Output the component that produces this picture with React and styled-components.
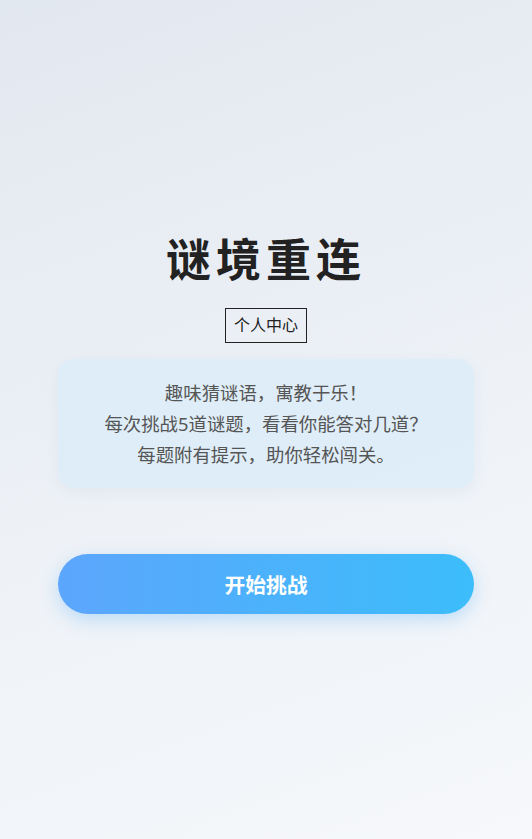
import React from "react";
import styled, { createGlobalStyle } from "styled-components";

const GlobalStyle = createGlobalStyle`
  html, body {
    margin: 0;
    padding: 0;
  }
  body {
    font-family: "Noto Sans", "Noto Sans CJK SC", sans-serif;
  }
  * {
    box-sizing: border-box;
  }
`;

const Page = styled.div`
  min-height: 100vh;
  display: flex;
  flex-direction: column;
  align-items: center;
  justify-content: center;
  padding: 8px 58px 0;
  background: linear-gradient(160deg, #e2e8f0 0%, #edf1f6 50%, #f6f8fb 100%);
`;

const Title = styled.h1`
  margin: 0 0 22px;
  font-size: 45px;
  line-height: 53px;
  font-weight: 700;
  letter-spacing: 5px;
  color: #222222;
`;

const ProfileButton = styled.button`
  font-family: inherit;
  font-size: 16px;
  line-height: 21px;
  padding: 6px 8px;
  color: #222222;
  background: transparent;
  border: 1px solid #222222;
  border-radius: 0;
  margin-bottom: 16px;
  cursor: pointer;
`;

const IntroCard = styled.div`
  width: 100%;
  padding: 18px 24px;
  border-radius: 16px;
  background: rgba(220, 236, 248, 0.85);
  box-shadow: 0 4px 14px rgba(150, 180, 210, 0.15);
  text-align: center;
`;

const IntroLine = styled.p`
  margin: 0;
  font-size: 18.4px;
  line-height: 1.7;
  color: #555555;
`;

const StartButton = styled.button`
  width: 100%;
  height: 60px;
  margin-top: 66px;
  border: none;
  border-radius: 30px;
  font-family: inherit;
  font-size: 20.8px;
  font-weight: 700;
  color: #ffffff;
  background: linear-gradient(90deg, #5ca6fd 0%, #3cbdfa 100%);
  box-shadow: 0 6px 18px rgba(70, 170, 250, 0.3);
  cursor: pointer;
`;

const lines = [
  "趣味猜谜语，寓教于乐！",
  "每次挑战5道谜题，看看你能答对几道？",
  "每题附有提示，助你轻松闯关。",
];

export default function App() {
  return (
    <>
      <GlobalStyle />
      <Page>
        <Title>谜境重连</Title>
        <ProfileButton>个人中心</ProfileButton>
        <IntroCard>
          {lines.map((line) => (
            <IntroLine key={line}>{line}</IntroLine>
          ))}
        </IntroCard>
        <StartButton>开始挑战</StartButton>
      </Page>
    </>
  );
}
